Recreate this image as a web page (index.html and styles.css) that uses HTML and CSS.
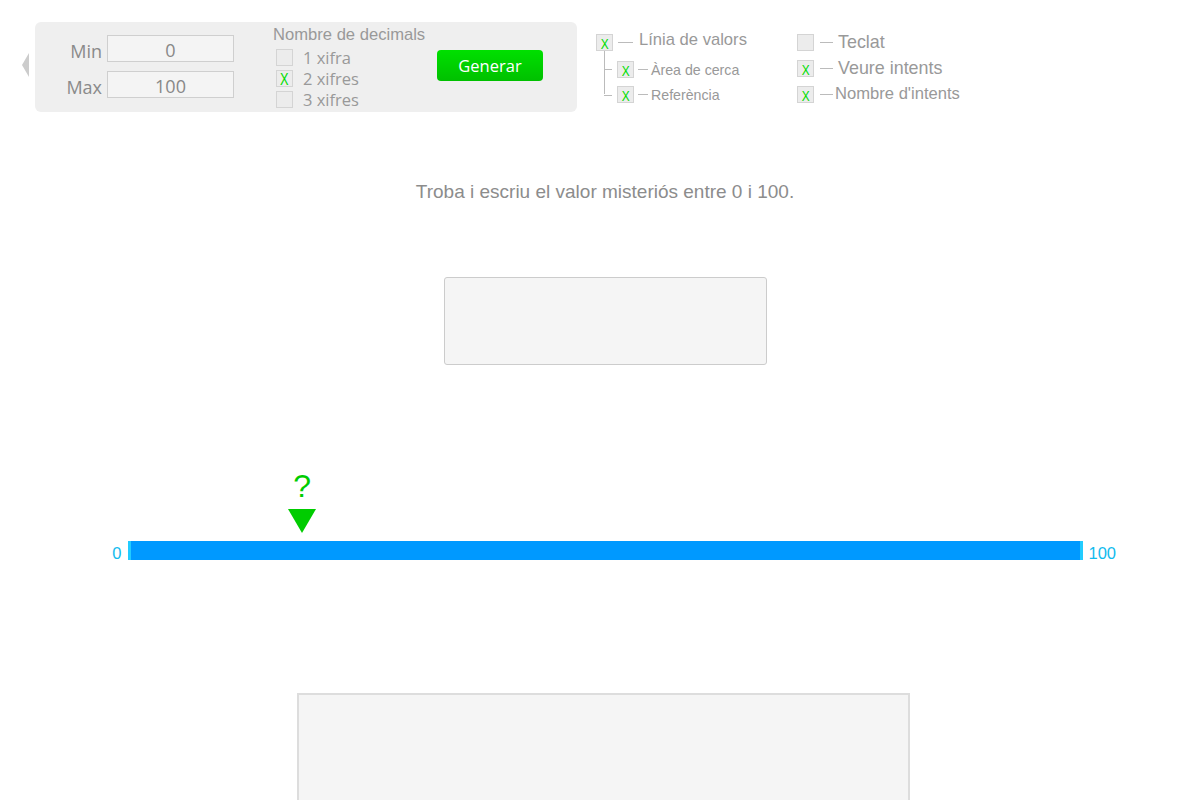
FILE: index.html
```html
<!DOCTYPE html>
<html lang="ca">
<head>
<meta charset="utf-8">
<title>Troba el valor</title>
<link rel="stylesheet" href="styles.css">
</head>
<body>
<div class="top">
  <div class="arrow"></div>
  <div class="panel">
    <div class="range">
      <span class="rlabel">Min</span><div class="rinput">0</div>
      <span class="rlabel">Max</span><div class="rinput">100</div>
    </div>
    <div class="decimals">
      <div class="dtitle">Nombre de decimals</div>
      <div class="drow"><span class="cb"></span><span>1 xifra</span></div>
      <div class="drow"><span class="cb"><span class="x">X</span></span><span>2 xifres</span></div>
      <div class="drow"><span class="cb"></span><span>3 xifres</span></div>
    </div>
    <div class="btn">Generar</div>
  </div>
  <div class="opts">
    <div class="ocol tree">
      <div class="orow"><span class="cb big"><span class="x">X</span></span><span class="dash"></span><span class="olabel">Línia de valors</span></div>
      <div class="orow sub s1"><span class="cb big"><span class="x">X</span></span><span class="dash short"></span><span class="slabel">Àrea de cerca</span></div>
      <div class="orow sub s2"><span class="cb big"><span class="x">X</span></span><span class="dash short"></span><span class="slabel">Referència</span></div>
    </div>
    <div class="ocol right">
      <div class="orow r1"><span class="cb big"></span><span class="dash"></span><span class="olabel lg">Teclat</span></div>
      <div class="orow r2"><span class="cb big"><span class="x">X</span></span><span class="dash"></span><span class="olabel lg">Veure intents</span></div>
      <div class="orow r3"><span class="cb big"><span class="x">X</span></span><span class="dash"></span><span class="olabel">Nombre d'intents</span></div>
    </div>
  </div>
</div>

<main class="main">
  <p class="prompt">Troba i escriu el valor misteriós entre 0 i 100.</p>
  <div class="answer"></div>
  <div class="numline">
    <span class="nl-label left">0</span>
    <div class="bar">
      <div class="marker" style="left:18.1%">
        <span class="q">?</span>
        <span class="tri"></span>
      </div>
    </div>
    <span class="nl-label right">100</span>
  </div>
  <div class="keyboard"></div>
</main>
</body>
</html>
```

FILE: styles.css
```css
html, body {
  margin: 0;
  padding: 0;
  background: #ffffff;
  height: 800px;
  overflow: hidden;
}
body {
  font-family: "Liberation Sans", Arial, sans-serif;
  color: #999;
}

.top {
  display: flex;
  align-items: flex-start;
  padding: 22px 0 0 22px;
  height: 90px;
}
.arrow {
  flex: none;
  width: 0;
  height: 0;
  border-right: 7px solid #cccccc;
  border-top: 12px solid transparent;
  border-bottom: 12px solid transparent;
  margin-top: 31px;
  margin-right: 6px;
}
.panel {
  flex: none;
  width: 542px;
  height: 90px;
  background: #efefef;
  border-radius: 6px;
  display: flex;
  align-items: flex-start;
  box-sizing: border-box;
}
.range {
  flex: none;
  display: grid;
  grid-template-columns: 67px 127px;
  column-gap: 5px;
  row-gap: 9px;
  margin-top: 13px;
  align-items: center;
  font-family: "Open Sans", sans-serif;
}
.rlabel {
  text-align: right;
  font-size: 18px;
  color: #8a8a8a;
  line-height: 27px;
  position: relative;
  top: 3px;
}
.rinput {
  height: 27px;
  box-sizing: border-box;
  border: 1px solid #cfcfcf;
  background: #f4f4f4;
  text-align: center;
  font-size: 18px;
  line-height: 25px;
  padding-top: 2px;
  color: #888;
}
.decimals {
  flex: none;
  margin-left: 39px;
  margin-top: 3px;
  width: 160px;
}
.dtitle {
  font-size: 16.6px;
  color: #999;
  line-height: 20px;
  margin-bottom: 2px;
}
.drow {
  display: flex;
  align-items: center;
  height: 21px;
  font-family: "Open Sans", sans-serif;
  font-size: 16.5px;
  color: #999;
  padding-left: 3px;
}
.drow .cb {
  margin-right: 10px;
}
.cb {
  width: 17px;
  height: 17px;
  box-sizing: border-box;
  border: 1px solid #d4d4d4;
  background: #ececec;
  display: inline-flex;
  align-items: flex-end;
  justify-content: center;
  flex: none;
}
.cb .x {
  color: #00dd00;
  font-family: "Liberation Sans", Arial, sans-serif;
  font-size: 16px;
  line-height: 13px;
  height: 13px;
  transform: scaleX(0.8);
}
.cb.big .x {
  font-size: 14px;
  line-height: 12px;
  height: 12px;
  transform: scaleX(0.85);
}
.btn {
  flex: none;
  margin-left: 4px;
  margin-top: 28px;
  width: 106px;
  height: 31px;
  border-radius: 4px;
  background: linear-gradient(#00e000, #00c000);
  color: #ffffff;
  font-family: "Open Sans", sans-serif;
  font-size: 16.5px;
  line-height: 31px;
  text-align: center;
}

.opts {
  display: flex;
  margin-left: 19px;
  margin-top: 12px;
}
.ocol {
  width: 201px;
  position: relative;
  flex: none;
}
.orow {
  display: flex;
  align-items: center;
  height: 17px;
  white-space: nowrap;
}
.dash {
  width: 15px;
  height: 1px;
  background: #bbb;
  margin: 0 6px 0 5px;
}
.dash.short {
  width: 10px;
  margin: 0 3px 0 4px;
}
.olabel {
  font-size: 16.6px;
  color: #999;
  position: relative;
  top: -3px;
}
.olabel.lg {
  font-size: 17.9px;
}
.slabel {
  font-size: 14.2px;
  color: #999;
  position: relative;
  top: 0;
}
.orow.sub {
  padding-left: 21px;
}
.orow.s1 { margin-top: 10px; }
.orow.s2 { margin-top: 8px; }
.tree::before {
  content: "";
  position: absolute;
  left: 8px;
  top: 17px;
  width: 12px;
  height: 43px;
  border-left: 1px solid #bbb;
}
.tree::after {
  content: "";
  position: absolute;
  left: 8px;
  top: 35px;
  width: 8px;
  height: 25px;
  border-top: 1px solid #bbb;
  border-bottom: 1px solid #bbb;
}
.right .orow.r1 .olabel { top: 0; }
.right .orow.r2 { margin-top: 9px; }
.right .orow.r3 { margin-top: 9px; }
.right .orow.r2 .olabel { top: 0; }
.right .orow.r3 .olabel { top: -1px; }
.right .dash { margin: 0 5px 0 6px; width: 13px; }
.right .orow.r3 .dash { margin-right: 2px; }

.main {
  display: flex;
  flex-direction: column;
  align-items: center;
  padding-left: 10px;
}
.prompt {
  margin: 70px 0 0 0;
  font-size: 19px;
  line-height: 20px;
  color: #8c8c8c;
}
.answer {
  margin-top: 75px;
  width: 323px;
  height: 88px;
  box-sizing: border-box;
  border: 1px solid #cccccc;
  border-radius: 3px;
  background: #f5f5f5;
}
.numline {
  margin-top: 176px;
  display: flex;
  align-items: center;
  height: 19px;
}
.nl-label {
  width: 40px;
  flex: none;
  font-size: 16.5px;
  color: #11bbee;
  line-height: 19px;
  position: relative;
  top: 3px;
}
.nl-label.left { margin-right: 6px; text-align: right; }
.nl-label.right { margin-left: 6px; text-align: left; }
.bar {
  position: relative;
  flex: none;
  width: 955px;
  height: 19px;
  box-sizing: border-box;
  background: #0099ff;
  border-left: 3px solid #22ccff;
  border-right: 3px solid #22ccff;
}
.marker {
  position: absolute;
  bottom: calc(100% + 8px);
  width: 28px;
  margin-left: -14px;
  display: flex;
  flex-direction: column;
  align-items: center;
}
.q {
  font-size: 32px;
  line-height: 32px;
  color: #00cc00;
  margin-bottom: 7px;
}
.tri {
  width: 0;
  height: 0;
  border-left: 14px solid transparent;
  border-right: 14px solid transparent;
  border-top: 24px solid #00cc00;
}
.keyboard {
  margin-top: 133px;
  margin-right: 3px;
  width: 613px;
  height: 200px;
  box-sizing: border-box;
  border: 2px solid #dddddd;
  background: #f5f5f5;
}
```
